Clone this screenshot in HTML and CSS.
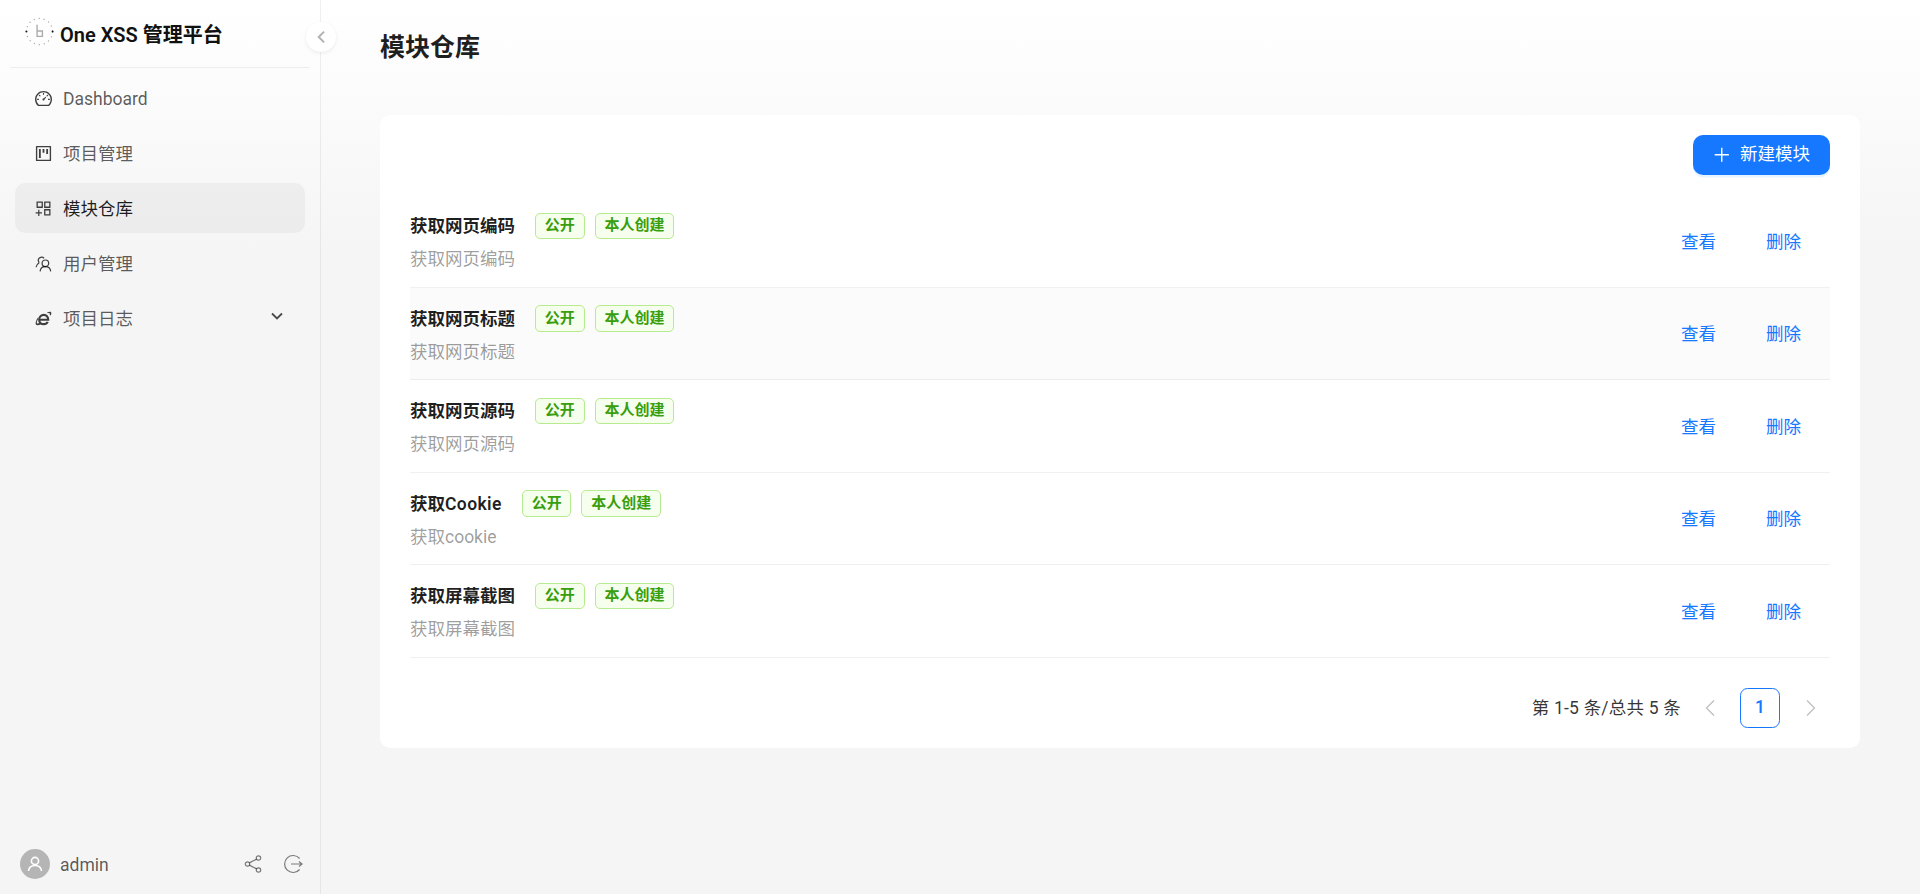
FILE: index.html
```html
<!DOCTYPE html>
<html lang="zh-CN">
<head>
    <meta charset="UTF-8">
    <title>模块仓库 - One XSS 管理平台</title>
    <link rel="stylesheet" href="styles.css">
</head>
<body>
    <div class="layout">
        <aside class="sider">
            <div class="brand">
                <svg class="brand-logo" viewBox="0 0 32 32">
                    <circle cx="16" cy="16" r="13.5" fill="none" stroke="#999" stroke-width="1.2" stroke-dasharray="1 4.2"/>
                    <circle cx="2.5" cy="16" r="1" fill="#111"/>
                    <circle cx="29.5" cy="16" r="1" fill="#111"/>
                    <path d="M13.5 9v12h5.500v-5.500h-5.500" fill="none" stroke="#aaa" stroke-width="1.4"/>
                </svg>
                <span class="brand-name">One XSS 管理平台</span>
            </div>
            <nav class="menu">
                <a class="menu-item">
                    <svg class="menu-icon" viewBox="64 64 896 896"><path d="M924.8 385.6a446.7 446.7 0 00-96-142.4 446.7 446.7 0 00-142.4-96C631.1 123.8 572.5 112 512 112s-119.1 11.8-174.4 35.2a446.7 446.7 0 00-142.4 96 446.7 446.7 0 00-96 142.4C75.8 440.9 64 499.5 64 560c0 132.7 58.3 257.7 159.9 343.1l1.7 1.4c5.8 4.8 13.1 7.5 20.6 7.5h531.7c7.5 0 14.8-2.7 20.6-7.5l1.7-1.4C901.7 817.7 960 692.7 960 560c0-60.5-11.9-119.1-35.2-174.4zM761.4 836H262.6A371.12 371.12 0 01140 560c0-99.4 38.7-192.8 109-263 70.3-70.3 163.7-109 263-109 99.4 0 192.8 38.7 263 109 70.3 70.3 109 163.7 109 263 0 105.6-44.5 205.5-122.6 276zM623.5 421.5a8.03 8.03 0 00-11.3 0L527.7 506c-18.7-5-39.4-.2-54.1 14.5a55.95 55.95 0 000 79.2 55.95 55.95 0 0079.2 0 55.87 55.87 0 0014.5-54.1l84.5-84.5c3.1-3.1 3.1-8.2 0-11.3l-28.3-28.3zM490 320h44c4.4 0 8-3.6 8-8v-80c0-4.4-3.6-8-8-8h-44c-4.4 0-8 3.6-8 8v80c0 4.4 3.6 8 8 8zm260 218v44c0 4.4 3.6 8 8 8h80c4.4 0 8-3.6 8-8v-44c0-4.4-3.6-8-8-8h-80c-4.4 0-8 3.6-8 8zm12.7-197.2l-31.1-31.1a8.03 8.03 0 00-11.3 0l-56.6 56.6a8.03 8.03 0 000 11.3l31.1 31.1c3.1 3.1 8.2 3.1 11.3 0l56.6-56.6c3.1-3.1 3.1-8.2 0-11.3zm-458.6-31.1a8.03 8.03 0 00-11.3 0l-31.1 31.1a8.03 8.03 0 000 11.3l56.6 56.6c3.1 3.1 8.2 3.1 11.3 0l31.1-31.1c3.1-3.1 3.1-8.2 0-11.3l-56.6-56.6zM262 530h-80c-4.4 0-8 3.6-8 8v44c0 4.4 3.6 8 8 8h80c4.4 0 8-3.6 8-8v-44c0-4.4-3.6-8-8-8z"/></svg>
                    <span>Dashboard</span>
                </a>
                <a class="menu-item">
                    <svg class="menu-icon" viewBox="64 64 896 896"><path d="M280 752h80c4.4 0 8-3.6 8-8V280c0-4.4-3.6-8-8-8h-80c-4.4 0-8 3.6-8 8v464c0 4.4 3.6 8 8 8zm192-280h80c4.4 0 8-3.6 8-8V280c0-4.4-3.6-8-8-8h-80c-4.4 0-8 3.6-8 8v184c0 4.4 3.6 8 8 8zm192 72h80c4.4 0 8-3.6 8-8V280c0-4.4-3.6-8-8-8h-80c-4.4 0-8 3.6-8 8v256c0 4.4 3.6 8 8 8zm216-432H144c-17.7 0-32 14.3-32 32v736c0 17.7 14.3 32 32 32h736c17.7 0 32-14.3 32-32V144c0-17.7-14.3-32-32-32zm-40 728H184V184h656v656z"/></svg>
                    <span>项目管理</span>
                </a>
                <a class="menu-item active">
                    <svg class="menu-icon" viewBox="64 64 896 896"><path d="M464 144H160c-8.8 0-16 7.2-16 16v304c0 8.8 7.2 16 16 16h304c8.8 0 16-7.2 16-16V160c0-8.8-7.2-16-16-16zm-52 268H212V212h200v200zm452-268H560c-8.8 0-16 7.2-16 16v304c0 8.8 7.2 16 16 16h304c8.8 0 16-7.2 16-16V160c0-8.8-7.2-16-16-16zm-52 268H612V212h200v200zm52 132H560c-8.8 0-16 7.2-16 16v304c0 8.8 7.2 16 16 16h304c8.8 0 16-7.2 16-16V560c0-8.8-7.2-16-16-16zm-52 268H612V612h200v200zM424 712H296V584c0-4.4-3.6-8-8-8h-48c-4.4 0-8 3.6-8 8v128H104c-4.4 0-8 3.6-8 8v48c0 4.4 3.6 8 8 8h128v128c0 4.4 3.6 8 8 8h48c4.4 0 8-3.6 8-8V776h128c4.4 0 8-3.6 8-8v-48c0-4.4-3.6-8-8-8z"/></svg>
                    <span>模块仓库</span>
                </a>
                <a class="menu-item">
                    <svg class="menu-icon line" viewBox="0 0 18 18">
                        <circle cx="11" cy="8.800" r="3.500"/>
                        <path d="M5.400 17.300c.3-3 2.500-4.900 5.600-4.900s5.300 1.900 5.600 4.900"/>
                        <path d="M9.600 3.400A3.700 3.700 0 0 0 3.400 5.200c0 1.100.4 2 1.200 2.700"/>
                        <path d="M4.400 8.200C2.600 9.300 1.400 10.900 1.100 13"/>
                    </svg>
                    <span>用户管理</span>
                </a>
                <a class="menu-item">
                    <svg class="menu-icon ie" viewBox="0 0 18 18">
                        <path class="ie-e" d="M4.800 10.300h9.200c0-3.300-1.900-5.100-4.600-5.100-2.800 0-5 2.100-5 5 0 2.800 2 4.800 4.900 4.800 2 0 3.500-.9 4.200-2.400"/>
                        <path d="M12.500 3c2-1 3.800-1.400 4.500-.7.700.7.300 2.200-.7 3.800-.2-.7-.6-1.300-1-1.800.2-.5.300-.9.100-1.100-.3-.2-.9-.1-1.600.2zM3 8C1 11.300 0 14.500 1.100 15.700c1 .9 3.100.5 5.300-.7-.7-.3-1.300-.7-1.800-1.200-1.200.5-2.100.6-2.500.2-.5-.6.100-2.400 1.100-4.300z"/>
                    </svg>
                    <span>项目日志</span>
                    <svg class="menu-arrow" viewBox="0 0 14 14"><path d="M2 4.500l5 5 5-5"/></svg>
                </a>
            </nav>
            <div class="sider-footer">
                <div class="avatar">
                    <svg viewBox="0 0 20 20"><circle cx="10" cy="7" r="3.600"/><path d="M3.500 17c.4-3.500 3-5.500 6.500-5.500s6.100 2 6.500 5.500"/></svg>
                </div>
                <span class="user-name">admin</span>
                <div class="footer-actions">
                    <svg class="footer-icon share" viewBox="0 0 18 18">
                        <circle cx="3.500" cy="9" r="2.200"/>
                        <circle cx="14.500" cy="3" r="2.200"/>
                        <circle cx="14.500" cy="15" r="2.200"/>
                        <path d="M5.400 7.900l7.200-3.800M5.400 10.100l7.200 3.800"/>
                    </svg>
                    <svg class="footer-icon logout" viewBox="0 0 20 20">
                        <path d="M16.600 4.500A8.500 8.500 0 1 0 16.600 15.500"/>
                        <path d="M8 10h11M16 7.500l3 2.500-3 2.500"/>
                    </svg>
                </div>
            </div>
            <button class="collapse-btn">
                <svg viewBox="0 0 12 12"><path d="M8.300 2L4.300 6l4 4"/></svg>
            </button>
        </aside>

        <main class="main">
            <h1 class="page-title">模块仓库</h1>
            <section class="card">
                <div class="toolbar">
                    <button class="btn-primary">
                        <svg viewBox="0 0 16 16"><path d="M8 1.500v13M1.500 8h13"/></svg>
                        <span>新建模块</span>
                    </button>
                </div>
                <ul class="list">
                    <li class="list-row">
                        <div class="row-body">
                            <div class="row-title"><strong>获取网页编码</strong><span class="tag">公开</span><span class="tag">本人创建</span></div>
                            <div class="row-desc">获取网页编码</div>
                        </div>
                        <div class="row-actions"><a>查看</a><a>删除</a></div>
                    </li>
                    <li class="list-row hover">
                        <div class="row-body">
                            <div class="row-title"><strong>获取网页标题</strong><span class="tag">公开</span><span class="tag">本人创建</span></div>
                            <div class="row-desc">获取网页标题</div>
                        </div>
                        <div class="row-actions"><a>查看</a><a>删除</a></div>
                    </li>
                    <li class="list-row">
                        <div class="row-body">
                            <div class="row-title"><strong>获取网页源码</strong><span class="tag">公开</span><span class="tag">本人创建</span></div>
                            <div class="row-desc">获取网页源码</div>
                        </div>
                        <div class="row-actions"><a>查看</a><a>删除</a></div>
                    </li>
                    <li class="list-row">
                        <div class="row-body">
                            <div class="row-title"><strong>获取<span class="latin">Cookie</span></strong><span class="tag">公开</span><span class="tag">本人创建</span></div>
                            <div class="row-desc">获取cookie</div>
                        </div>
                        <div class="row-actions"><a>查看</a><a>删除</a></div>
                    </li>
                    <li class="list-row">
                        <div class="row-body">
                            <div class="row-title"><strong>获取屏幕截图</strong><span class="tag">公开</span><span class="tag">本人创建</span></div>
                            <div class="row-desc">获取屏幕截图</div>
                        </div>
                        <div class="row-actions"><a>查看</a><a>删除</a></div>
                    </li>
                </ul>
                <div class="pagination">
                    <span class="page-total">第 1-5 条/总共 5 条</span>
                    <svg class="page-arrow" viewBox="0 0 40 18"><path d="M24 1.500L16.500 9l7.500 7.500"/></svg>
                    <span class="page-num">1</span>
                    <svg class="page-arrow" viewBox="0 0 40 18"><path d="M17 1.500L24.500 9 17 16.500"/></svg>
                </div>
            </section>
        </main>
    </div>
</body>
</html>
```

FILE: styles.css
```css
* { box-sizing: border-box; }
html, body { margin: 0; height: 100%; }
body { font-family: Roboto, "Noto Sans CJK SC", sans-serif; font-size: 17.5px; line-height: 1.5715; color: rgba(0, 0, 0, 0.88); background: linear-gradient(#ffffff, #f5f5f5 250px); overflow: hidden; }
ul { list-style: none; margin: 0; padding: 0; }
.layout { display: flex; height: 894px; }

/* sider */
.sider { position: relative; flex: 0 0 321px; display: flex; flex-direction: column; border-right: 1px solid rgba(0, 0, 0, 0.06); }
.brand { display: flex; align-items: center; gap: 5px; height: 68px; margin: 0 10px; padding: 0 14px 1px; border-bottom: 1px solid rgba(0, 0, 0, 0.06); }
.brand-logo { width: 31px; height: 31px; margin-top: -4px; }
.brand-name { padding-top: 6px; font-size: 20px; font-weight: 600; color: #111; }
.menu { flex: 1; display: flex; flex-direction: column; gap: 5px; padding: 5px 15px 0; }
.menu-item { display: flex; align-items: center; gap: 11px; height: 50px; padding: 0 20px; border-radius: 10px; color: rgba(0, 0, 0, 0.65); }
.menu-item span { padding-top: 3px; }
.menu-item.active { background: rgba(0, 0, 0, 0.04); color: rgba(0, 0, 0, 0.88); }
.menu-icon { flex: none; width: 17px; height: 17px; fill: rgba(0, 0, 0, 0.75); }
.menu-icon.line { fill: none; stroke: rgba(0, 0, 0, 0.75); stroke-width: 1.3; }
.ie-e { fill: none; stroke: rgba(0, 0, 0, 0.75); stroke-width: 2.3; }
.menu-arrow { width: 14px; height: 14px; margin-left: auto; margin-right: 1px; margin-top: -4px; fill: none; stroke: rgba(0, 0, 0, 0.7); stroke-width: 1.8; }
.sider-footer { display: flex; align-items: center; gap: 10px; height: 60px; padding: 0 17px 0 20px; }
.avatar { display: flex; align-items: center; justify-content: center; width: 30px; height: 30px; border-radius: 50%; background: #b5b5b5; }
.avatar svg { width: 20px; height: 20px; fill: none; stroke: #fff; stroke-width: 1.6; }
.user-name { padding-top: 4px; color: rgba(0, 0, 0, 0.65); }
.footer-actions { display: flex; align-items: center; gap: 21px; margin-left: auto; }
.footer-icon { fill: none; stroke: rgba(0, 0, 0, 0.5); stroke-width: 1.2; }
.footer-icon.share { width: 18px; height: 18px; }
.footer-icon.logout { width: 20px; height: 20px; }
.collapse-btn { position: absolute; top: 22px; right: -16px; display: flex; align-items: center; justify-content: center; width: 30px; height: 30px; padding: 0; border: 0; border-radius: 50%; background: #fff; box-shadow: 0 2px 8px -2px rgba(0, 0, 0, 0.05), 0 1px 4px -1px rgba(25, 15, 15, 0.07); z-index: 2; }
.collapse-btn svg { width: 16px; height: 16px; fill: none; stroke: rgba(0, 0, 0, 0.3); stroke-width: 1.5; }

/* main */
.main { flex: 1; padding: 0 60px 0 59px; }
.page-title { margin: 0; height: 115px; padding-top: 30px; font-size: 25px; line-height: 36px; font-weight: 600; color: rgba(0, 0, 0, 0.88); }
.card { padding: 20px 30px; background: #fff; border-radius: 10px; }
.toolbar { display: flex; justify-content: flex-end; margin-bottom: 20px; }
.btn-primary { display: flex; align-items: center; gap: 10px; height: 40px; padding: 0 20px; border: 0; border-radius: 10px; background: #1677ff; color: #fff; font: inherit; box-shadow: 0 2.5px 0 rgba(5, 145, 255, 0.1); }
.btn-primary svg { width: 17.5px; height: 17.5px; fill: none; stroke: #fff; stroke-width: 1.3; }

.list-row { display: flex; align-items: center; justify-content: space-between; height: 92.5px; padding: 15px 0; border-bottom: 1px solid rgba(5, 5, 5, 0.06); }
.list-row.hover { background: rgba(0, 0, 0, 0.015); }
.row-body { align-self: flex-start; }
.row-title { display: flex; align-items: center; height: 30px; }
.row-title strong { padding-top: 4px; font-weight: 600; margin-right: 20px; }
.latin { letter-spacing: 0.4px; }
.tag { display: inline-flex; align-items: center; height: 26.5px; padding: 0 8.8px; margin: 2px 10px 0 0; border: 1px solid #b7eb8f; border-radius: 5px; background: #f6ffed; color: #389e0d; font-size: 15px; font-weight: 600; }
.row-desc { margin-top: 4px; line-height: 30px; color: rgba(0, 0, 0, 0.4); }
.row-actions { display: flex; gap: 50px; padding-right: 29px; }
.row-actions a { padding-top: 3px; color: #1677ff; }

.pagination { display: flex; align-items: center; justify-content: flex-end; height: 40px; margin-top: 30px; }
.page-total { margin-right: 9px; padding-top: 2px; color: rgba(0, 0, 0, 0.8); letter-spacing: 0.2px; }
.page-arrow { width: 40px; height: 18px; fill: none; stroke: rgba(0, 0, 0, 0.25); stroke-width: 1.3; }
.page-num { display: flex; align-items: center; justify-content: center; width: 40px; height: 40px; margin: 0 10px; border: 1px solid #1677ff; border-radius: 7.5px; color: #1677ff; font-weight: 500; }
```
